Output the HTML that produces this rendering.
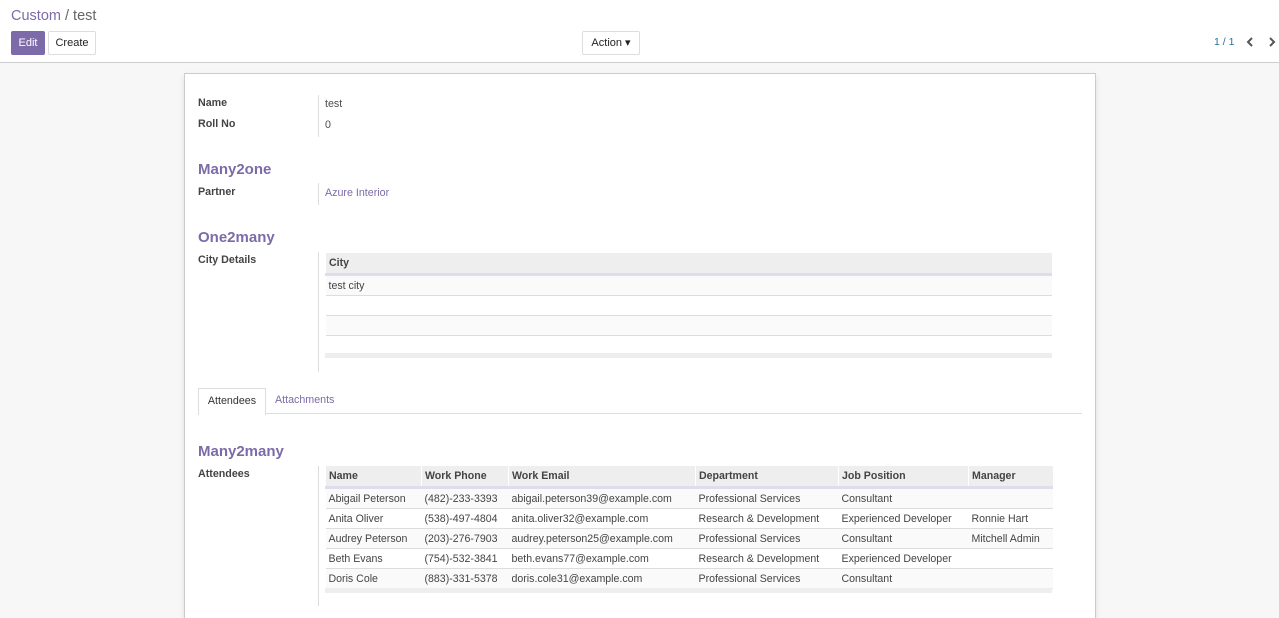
<!DOCTYPE html><html><head><style>
html,body{margin:0;width:1279px;height:618px;overflow:hidden}
body{font-family:"Liberation Sans",sans-serif;font-size:12px;color:#4c4c4c;background:#f7f7f7;position:relative}
.hdr{position:absolute;left:0;top:0;width:1279px;height:62px;background:#fff;border-bottom:1px solid #ccc}
.a{position:absolute}
.btn{position:absolute;top:31px;height:22px;line-height:22px;font-size:11px;border-radius:2px;text-align:center}
.sheet{position:absolute;left:184px;top:73px;width:910px;height:545px;background:#fff;border:1px solid #ccc;border-bottom:none;box-shadow:0 3px 6px rgba(0,0,0,.1)}
.lbl{position:absolute;left:198px;font-weight:bold;font-size:10.7px;color:#444}
.val{position:absolute;left:325px;font-size:10.7px}
.h{position:absolute;left:198px;font-size:15px;font-weight:bold;color:#7c6ba8}
.sep{position:absolute;left:318px;width:1px;background:#ddd}
table{position:absolute;border-collapse:collapse;font-size:10.6px;table-layout:fixed}
th{background:#eee;text-align:left;padding:0 3px;height:20px;border-bottom:3px solid #dde;border-left:1px solid #fff;font-weight:bold;color:#444}
td{padding:0 3px;height:19px;border-bottom:1px solid #ddd;color:#444;white-space:nowrap;overflow:hidden}
tr:nth-child(even) td{background:#fafafa}
</style></head><body>
<div class="hdr"></div>
<div class="a" style="left:11px;top:8px;font-size:14.5px;color:#666"><span style="color:#7c6ba8">Custom</span> / test</div>
<div class="btn" style="left:11px;width:34px;background:#7c6ba8;color:#fff;top:31px;height:24px;line-height:24px">Edit</div>
<div class="btn" style="left:48px;width:46px;border:1px solid #ddd;color:#222;background:#fff">Create</div>
<div class="btn" style="left:582px;width:56px;border:1px solid #ddd;color:#222;background:#fff">Action ▾</div>
<div class="a" style="left:1214px;top:36px;font-size:10.5px;color:#2a6e9a">1 / 1</div>
<svg class="a" style="left:1245px;top:37px" width="10" height="10"><path d="M7 1L3 5l4 4" stroke="#555" stroke-width="2" fill="none"/></svg>
<svg class="a" style="left:1267px;top:37px" width="10" height="10"><path d="M3 1l4 4-4 4" stroke="#555" stroke-width="2" fill="none"/></svg>
<div class="sheet"></div>
<div class="lbl" style="top:97px">Name</div><div class="val" style="top:98px">test</div>
<div class="lbl" style="top:118px">Roll No</div><div class="val" style="top:119px">0</div>
<div class="sep" style="top:95px;height:42px"></div>
<div class="h" style="top:161px">Many2one</div>
<div class="lbl" style="top:186px">Partner</div><div class="val" style="top:187px;color:#7c6ba8">Azure Interior</div>
<div class="sep" style="top:183px;height:22px"></div>
<div class="h" style="top:229px">One2many</div>
<div class="lbl" style="top:254px">City Details</div>
<div class="sep" style="top:252px;height:120px"></div>
<table style="left:325px;top:253px;width:727px"><tr><th>City</th></tr>
<tr><td>test city</td></tr><tr><td></td></tr><tr><td></td></tr><tr><td></td></tr></table>
<div class="a" style="left:325px;top:353px;width:727px;height:5px;background:#eee"></div>
<div class="a" style="left:198px;top:413px;width:884px;height:1px;background:#ddd"></div>
<div class="a" style="left:198px;top:388px;width:66px;height:26px;background:#fff;border:1px solid #ddd;border-bottom:none;text-align:center;line-height:25px;font-size:10.7px;color:#333">Attendees</div>
<div class="a" style="left:275px;top:394px;font-size:10.7px;color:#7c6ba8">Attachments</div>
<div class="h" style="top:443px">Many2many</div>
<div class="lbl" style="top:468px">Attendees</div>
<div class="sep" style="top:466px;height:140px"></div>
<table style="left:325px;top:466px;width:727px">
<colgroup><col style="width:96px"><col style="width:87px"><col style="width:187px"><col style="width:143px"><col style="width:130px"><col style="width:84px"></colgroup>
<tr><th>Name</th><th>Work Phone</th><th>Work Email</th><th>Department</th><th>Job Position</th><th>Manager</th></tr>
<tr><td>Abigail Peterson</td><td>(482)-233-3393</td><td>abigail.peterson39@example.com</td><td>Professional Services</td><td>Consultant</td><td></td></tr>
<tr><td>Anita Oliver</td><td>(538)-497-4804</td><td>anita.oliver32@example.com</td><td>Research &amp; Development</td><td>Experienced Developer</td><td>Ronnie Hart</td></tr>
<tr><td>Audrey Peterson</td><td>(203)-276-7903</td><td>audrey.peterson25@example.com</td><td>Professional Services</td><td>Consultant</td><td>Mitchell Admin</td></tr>
<tr><td>Beth Evans</td><td>(754)-532-3841</td><td>beth.evans77@example.com</td><td>Research &amp; Development</td><td>Experienced Developer</td><td></td></tr>
<tr><td>Doris Cole</td><td>(883)-331-5378</td><td>doris.cole31@example.com</td><td>Professional Services</td><td>Consultant</td><td></td></tr>
</table>
<div class="a" style="left:325px;top:588px;width:727px;height:5px;background:#eee"></div>
</body></html>
